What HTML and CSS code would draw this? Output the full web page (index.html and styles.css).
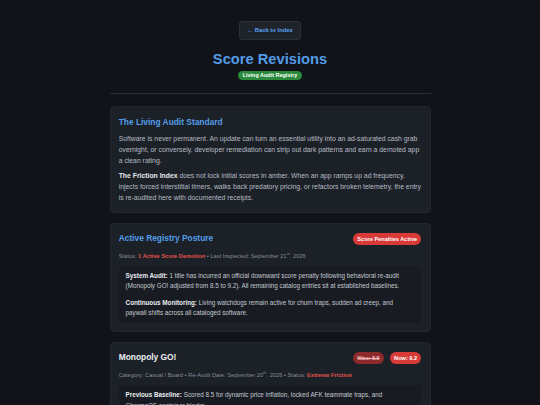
FILE: index.html
```html
<!DOCTYPE html>
<html lang="en">
<head>
<meta charset="utf-8">
<title>Score Revisions</title>
<link rel="stylesheet" href="styles.css">
</head>
<body>
<div class="wrap">
  <header class="page-head">
    <a class="back" href="#">&larr; Back to Index</a>
    <h1 class="page-title">Score Revisions</h1>
    <span class="pill pill-green">Living Audit Registry</span>
  </header>

  <section class="card">
    <h2 class="card-title">The Living Audit Standard</h2>
    <p class="copy">Software is never permanent. An update can turn an essential utility into an ad-saturated cash grab overnight, or conversely, developer remediation can strip out dark patterns and earn a demoted app a clean rating.</p>
    <p class="copy"><strong>The Friction Index</strong> does not lock initial scores in amber. When an app ramps up ad frequency, injects forced interstitial timers, walks back predatory pricing, or refactors broken telemetry, the entry is re-audited here with documented receipts.</p>
  </section>

  <section class="card">
    <div class="card-head">
      <h2 class="card-title">Active Registry Posture</h2>
      <span class="tag tag-red">Score Penalties Active</span>
    </div>
    <p class="meta">Status: <span class="alert">1 Active Score Demotion</span> &bull; Last Inspected: September 21<sup>st</sup>, 2026</p>
    <div class="inset">
      <p><strong>System Audit:</strong> 1 title has incurred an official downward score penalty following behavioral re-audit (Monopoly GO! adjusted from 8.5 to 9.2). All remaining catalog entries sit at established baselines.</p>
      <p><strong>Continuous Monitoring:</strong> Living watchdogs remain active for churn traps, sudden ad creep, and paywall shifts across all cataloged software.</p>
    </div>
  </section>

  <section class="card">
    <div class="card-head">
      <h2 class="card-title app-name">Monopoly GO!</h2>
      <div class="tags">
        <span class="tag tag-was">Was: 8.5</span>
        <span class="tag tag-red">Now: 9.2</span>
      </div>
    </div>
    <p class="meta">Category: Casual / Board &bull; Re-Audit Date: September 20<sup>th</sup>, 2026 &bull; Status: <span class="alert">Extreme Friction</span></p>
    <div class="inset">
      <p><strong>Previous Baseline:</strong> Scored 8.5 for dynamic price inflation, locked AFK teammate traps, and ChromeOS container blocks.</p>
      <p><strong>Re-Audit Findings:</strong> Event-gated progression and escalating purchase prompts pushed the friction rating higher.</p>
    </div>
  </section>
</div>
</body>
</html>
```

FILE: styles.css
```css
* { box-sizing: border-box; }

html, body {
  margin: 0;
  padding: 0;
  background: #111318;
}

body {
  font-family: "Liberation Sans", Arial, sans-serif;
  font-size: 6.84px;
  line-height: 1.58;
  color: #b4bbc4;
  padding-top: 21px;
}

.wrap {
  width: 321px;
  margin: 0 auto;
}

.page-head {
  display: flex;
  flex-direction: column;
  align-items: center;
  padding-bottom: 13px;
  border-bottom: 1px solid #2a2e35;
  margin-bottom: 12.5px;
}

.back {
  display: inline-block;
  font-size: 5.88px;
  font-weight: bold;
  line-height: 1.15;
  color: #5aa2ee;
  text-decoration: none;
  background: #1f242b;
  border: 1px solid #2a3038;
  border-radius: 3px;
  padding: 5.2px 7.5px;
}

.page-title {
  margin: 11px 0 2px;
  font-size: 14.7px;
  line-height: 1.2;
  font-weight: bold;
  color: #549ce9;
}

.pill {
  display: inline-block;
  font-size: 5.46px;
  font-weight: bold;
  line-height: 1.15;
  border-radius: 999px;
  padding: 1.4px 5px;
  color: #ffffff;
}

.pill-green { background: #2a8a3c; }

.card {
  background: #1c2027;
  border: 1px solid #22262e;
  border-radius: 4px;
  padding: 8.2px;
  margin-bottom: 10px;
}

.card-head {
  display: flex;
  align-items: center;
  justify-content: space-between;
}

.card-title {
  margin: 0 0 5px;
  font-size: 8.4px;
  line-height: 1.6;
  font-weight: bold;
  color: #559ee9;
}

.card-head .card-title { margin: 0; }

.app-name { color: #eef1f5; }

.copy { margin: 0 0 5px; }
.copy:last-child { margin-bottom: 0; }
.copy strong { color: #e6eaef; }

.tags {
  display: flex;
  gap: 6px;
}

.tag {
  display: inline-block;
  font-size: 5.6px;
  font-weight: bold;
  line-height: 1.15;
  border-radius: 999px;
  padding: 2.9px 4.2px;
  color: #ffffff;
}

.tag-red { background: #d73a37; }

.tag-was {
  background: #8d2a2b;
  color: #f0b9b9;
  text-decoration: line-through;
}

.meta {
  margin: 6px 0 5.5px;
  font-size: 5.72px;
  color: #858d97;
}

.meta sup {
  font-size: 70%;
  line-height: 0;
}

.alert {
  color: #e5534b;
  font-weight: bold;
}

.inset {
  background: #181b21;
  border-radius: 3px;
  padding: 4.8px 6.9px;
  font-size: 6.3px;
  line-height: 1.65;
  color: #c3cad2;
}

.inset p { margin: 0 0 5.8px; }
.inset p:last-child { margin-bottom: 0; }
.inset strong { color: #e9edf2; }
```
